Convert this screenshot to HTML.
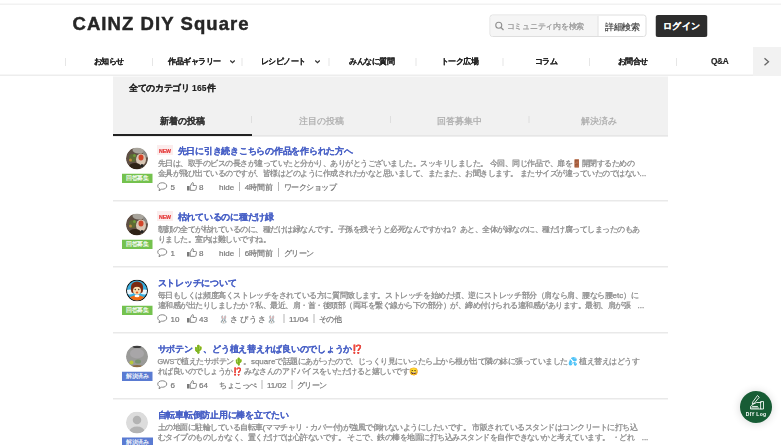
<!DOCTYPE html>
<html><head><meta charset="utf-8">
<style>
*{box-sizing:border-box;margin:0;padding:0}
html,body{width:781px;height:445px;overflow:hidden;background:#fff}
body{font-family:"Liberation Sans",sans-serif;color:#333;position:relative}
#r{position:absolute;left:0;top:0;width:1562px;height:890px;transform:scale(0.5);transform-origin:0 0;overflow:hidden}
.a{position:absolute;white-space:nowrap}
.topline{left:0;top:7px;width:1562px;height:3px;background:#f2f2f2}
.logo{left:145px;top:23px;font-size:37px;font-weight:bold;letter-spacing:2.15px;color:#262626;line-height:48px;-webkit-text-stroke:0.9px #262626}
.search{left:979px;top:29px;width:314px;height:45px;border:2px solid #dedede;border-radius:6px;background:#fff;overflow:hidden}
.search .inp{position:absolute;left:0;top:0;width:216px;height:41px;background:#f5f5f5;border-right:2px solid #e4e4e4}
.search .ph{position:absolute;left:32px;top:11px;font-size:15px;letter-spacing:0.5px;line-height:20px;color:#9a9a9a;-webkit-text-stroke:0.5px #9a9a9a}
.search .btn{position:absolute;left:229px;top:14px;font-size:17px;line-height:20px;color:#444;-webkit-text-stroke:0.4px #444}
.login{left:1311px;top:30px;width:104px;height:44px;background:#2d2d2d;border-radius:5px;color:#fff;font-size:18.5px;font-weight:bold;line-height:44px;text-align:center;-webkit-text-stroke:0.3px #fff}
.it{top:94px;height:56px;font-size:15px;font-weight:bold;color:#222;line-height:56px;-webkit-text-stroke:0.3px #222}
.sep{top:116px;width:2px;height:16px;background:#e6e6e6}
.chev{top:119px}
.navline{left:0;top:149px;width:1506px;height:3px;background:#ededed}
.navnext{left:1506px;top:94px;width:56px;height:58px;background:#f2f2f2}
.panel{left:226px;top:153px;width:1110px;height:120px;background:#f1f1f1}
.cat{left:258px;top:164px;font-size:17px;letter-spacing:0.3px;font-weight:bold;color:#222;line-height:24px;-webkit-text-stroke:0.3px #222}
.tab{top:230px;width:277.5px;text-align:center;font-size:17.5px;line-height:24px;color:#aaa;-webkit-text-stroke:0.4px #aaa}
.tab.on{color:#333;font-weight:bold;-webkit-text-stroke:0.3px #333}
.tabsep{top:232px;width:2px;height:14px;background:#dedede}
.tabline{left:226px;top:270px;width:1110px;height:3px;background:#e6e6e6}
.uline{left:226px;top:268px;width:277.5px;height:4px;background:#222}
.post{position:absolute;left:226px;width:1110px;height:133px;border-bottom:3px solid #e9e9e9}
.av{position:absolute;left:26px;top:25px;width:44px;height:44px;border-radius:50%;overflow:hidden}
.badge{position:absolute;left:18px;top:77px;width:61px;height:19px;font-size:11px;line-height:19px;color:#fff;text-align:center;white-space:nowrap;-webkit-text-stroke:0.3px #fff}
.green{background:#74c24e}
.blue{background:#5a7bd2}
.new{position:absolute;left:88px;top:20px;width:32px;height:20px;background:#fbeded;color:#e53838;font-size:10.5px;font-weight:bold;line-height:25px;text-align:center;letter-spacing:-0.2px;-webkit-text-stroke:0.4px #e53838}
.ttl{position:absolute;left:129px;top:20px;font-size:17px;letter-spacing:0.5px;line-height:24px;color:#4860c6;font-weight:bold;white-space:nowrap;-webkit-text-stroke:0.35px #4860c6}
.ttl.nn{left:89px}
.body{position:absolute;left:89px;top:46px;font-size:15px;line-height:20px;color:#8a8a8a;white-space:nowrap;-webkit-text-stroke:0.5px #8a8a8a}
.mt{position:absolute;top:92px;height:24px;font-size:15px;line-height:24px;color:#777;white-space:nowrap;-webkit-text-stroke:0.4px #777}
.l{font-size:16px}
.g{font-size:14.5px;letter-spacing:-0.6px}
.ic{position:absolute}
.bar{display:inline-block;width:2px;height:18px;background:#b5b5b5;margin:0 9px 0 10px;vertical-align:-3px}
.un{letter-spacing:3.5px}
</style></head><body><div id="r">
<div class="a topline"></div>
<div class="a logo">CAINZ DIY Square</div>
<div class="a search"><div class="inp">
<svg style="position:absolute;left:8px;top:11px" width="20" height="20" viewBox="0 0 20 20"><circle cx="8.5" cy="8.5" r="6" fill="none" stroke="#909090" stroke-width="2.2"/><path d="M13 13L18 18" stroke="#909090" stroke-width="2.4"/></svg>
<div class="ph">コミュニティ内を検索</div></div><div class="btn">詳細検索</div></div>
<div class="a login">ログイン</div>

<div class="a sep" style="left:130px"></div>
<div class="a it" style="left:187px">お知らせ</div>
<div class="a sep" style="left:304px"></div>
<div class="a it" style="left:336px">作品ギャラリー</div>
<svg class="a chev" style="left:459px" width="12" height="10" viewBox="0 0 12 10"><path d="M1.5 2L6 6.5L10.5 2" fill="none" stroke="#333" stroke-width="2.4"/></svg>
<div class="a sep" style="left:483px"></div>
<div class="a it" style="left:521px">レシピノート</div>
<svg class="a chev" style="left:629px" width="12" height="10" viewBox="0 0 12 10"><path d="M1.5 2L6 6.5L10.5 2" fill="none" stroke="#333" stroke-width="2.4"/></svg>
<div class="a sep" style="left:657px"></div>
<div class="a it" style="left:698px">みんなに質問</div>
<div class="a sep" style="left:831px"></div>
<div class="a it" style="left:881px">トーク広場</div>
<div class="a sep" style="left:1005px"></div>
<div class="a it" style="left:1069px">コラム</div>
<div class="a sep" style="left:1178px"></div>
<div class="a it" style="left:1235px">お問合せ</div>
<div class="a sep" style="left:1352px"></div>
<div class="a it" style="left:1422px;font-size:16.5px;letter-spacing:-0.6px;top:93px">Q&amp;A</div>
<div class="a navnext"><svg style="position:absolute;left:16px;top:20px" width="20" height="20" viewBox="0 0 20 20"><path d="M7 2.5L15 9.5L7 16.5" fill="none" stroke="#666" stroke-width="2.6"/></svg></div>
<div class="a navline"></div>

<div class="a panel"></div>
<div class="a cat">全てのカテゴリ 165件</div>
<div class="a tabline"></div>
<div class="a tab on" style="left:226px">新着の投稿</div>
<div class="a tabsep" style="left:502px"></div>
<div class="a tab" style="left:503.5px">注目の投稿</div>
<div class="a tabsep" style="left:780px"></div>
<div class="a tab" style="left:781px">回答募集中</div>
<div class="a tabsep" style="left:1057px"></div>
<div class="a tab" style="left:1058.5px">解決済み</div>
<div class="a uline"></div>

<div class="post" style="top:270px">
<div class="av"><svg width="44" height="44" viewBox="0 0 44 44"><defs><clipPath id="c1"><circle cx="22" cy="22" r="22"/></clipPath><filter id="f1" x="-20%" y="-20%" width="140%" height="140%"><feGaussianBlur stdDeviation="1.1"/></filter></defs><g clip-path="url(#c1)"><g filter="url(#f1)">
<rect x="-5" y="-5" width="54" height="54" fill="#5e5044"/>
<ellipse cx="26" cy="5" rx="13" ry="7" fill="#a8a49c"/>
<ellipse cx="40" cy="12" rx="6" ry="8" fill="#8c8a86"/>
<ellipse cx="13" cy="21" rx="7" ry="8" fill="#5d6a34"/>
<ellipse cx="9" cy="25" rx="3" ry="3" fill="#b88a3c"/>
<ellipse cx="17" cy="16" rx="3" ry="3" fill="#6e9a3a"/>
<ellipse cx="30" cy="24" rx="10" ry="12" fill="#d8c6b4"/>
<ellipse cx="30" cy="20" rx="5" ry="6" fill="#d2452c"/>
<ellipse cx="18" cy="38" rx="12" ry="7" fill="#2e2218"/>
<ellipse cx="32" cy="36" rx="3" ry="3" fill="#222"/>
</g></g></svg></div>
<div class="badge green">回答募集</div>
<div class="new">NEW</div>
<div class="ttl">先日に引き続きこちらの作品を作られた方へ</div>
<div class="body">先日は、取手のビスの長さが違っていたと分かり、ありがとうございました。スッキリしました。 今回、同じ作品で、扉を🚪開閉するための<br>金具が飛び出ているのですが、皆様はどのように作成されたかなと思いまして、またまた、お聞きします。 またサイズが違っていたのではない<span class="l">...</span></div>
<svg class="ic" style="left:88px;top:94px" width="22" height="20" viewBox="0 0 22 20"><path d="M10.5 1.5C5.2 1.5 1.5 4.4 1.5 8c0 2.3 1.4 4.1 3.6 5.2L4 17.5l5-3.1c.5.1 1 .1 1.5.1 5.3 0 9-2.9 9-6.5s-3.7-6.5-9-6.5z" fill="none" stroke="#7a7a7a" stroke-width="1.8" stroke-linejoin="round"/></svg>
<div class="mt l" style="left:115px">5</div>
<svg class="ic" style="left:147px;top:93px" width="22" height="20" viewBox="0 0 22 20"><rect x="1" y="9" width="5" height="9" fill="#7a7a7a"/><path d="M7.5 9.5L11.5 2.5c1.2-.8 2.6 0 2.4 1.5L13 8h5.5c1.2 0 2 .9 1.7 2.1l-1.6 6.2c-.3.9-1 1.4-1.9 1.4H7.5z" fill="none" stroke="#7a7a7a" stroke-width="1.8" stroke-linejoin="round"/></svg>
<div class="mt l" style="left:172px">8</div>
<div class="mt" style="left:212px"><span class="l">hide</span><span class="bar"></span><span class="l">4時間前</span><span class="bar"></span>ワークショップ</div>
</div>

<div class="post" style="top:402px">
<div class="av"><svg width="44" height="44" viewBox="0 0 44 44"><defs><clipPath id="c2"><circle cx="22" cy="22" r="22"/></clipPath><filter id="f2" x="-20%" y="-20%" width="140%" height="140%"><feGaussianBlur stdDeviation="1.1"/></filter></defs><g clip-path="url(#c2)"><g filter="url(#f2)">
<rect x="-5" y="-5" width="54" height="54" fill="#5e5044"/>
<ellipse cx="26" cy="5" rx="13" ry="7" fill="#a8a49c"/>
<ellipse cx="40" cy="12" rx="6" ry="8" fill="#8c8a86"/>
<ellipse cx="13" cy="21" rx="7" ry="8" fill="#5d6a34"/>
<ellipse cx="9" cy="25" rx="3" ry="3" fill="#b88a3c"/>
<ellipse cx="17" cy="16" rx="3" ry="3" fill="#6e9a3a"/>
<ellipse cx="30" cy="24" rx="10" ry="12" fill="#d8c6b4"/>
<ellipse cx="30" cy="20" rx="5" ry="6" fill="#d2452c"/>
<ellipse cx="18" cy="38" rx="12" ry="7" fill="#2e2218"/>
<ellipse cx="32" cy="36" rx="3" ry="3" fill="#222"/>
</g></g></svg></div>
<div class="badge green">回答募集</div>
<div class="new">NEW</div>
<div class="ttl">枯れているのに種だけ緑</div>
<div class="body">朝顔の全てが枯れているのに、種だけは緑なんです。子孫を残そうと必死なんですかね？ あと、全体が緑なのに、種だけ腐ってしまったのもあ<br>りました。室内は難しいですね。</div>
<svg class="ic" style="left:88px;top:94px" width="22" height="20" viewBox="0 0 22 20"><path d="M10.5 1.5C5.2 1.5 1.5 4.4 1.5 8c0 2.3 1.4 4.1 3.6 5.2L4 17.5l5-3.1c.5.1 1 .1 1.5.1 5.3 0 9-2.9 9-6.5s-3.7-6.5-9-6.5z" fill="none" stroke="#7a7a7a" stroke-width="1.8" stroke-linejoin="round"/></svg>
<div class="mt l" style="left:115px">1</div>
<svg class="ic" style="left:147px;top:93px" width="22" height="20" viewBox="0 0 22 20"><rect x="1" y="9" width="5" height="9" fill="#7a7a7a"/><path d="M7.5 9.5L11.5 2.5c1.2-.8 2.6 0 2.4 1.5L13 8h5.5c1.2 0 2 .9 1.7 2.1l-1.6 6.2c-.3.9-1 1.4-1.9 1.4H7.5z" fill="none" stroke="#7a7a7a" stroke-width="1.8" stroke-linejoin="round"/></svg>
<div class="mt l" style="left:172px">8</div>
<div class="mt" style="left:212px"><span class="l">hide</span><span class="bar"></span><span class="l">6時間前</span><span class="bar"></span>グリーン</div>
</div>

<div class="post" style="top:534px">
<div class="av"><svg width="44" height="44" viewBox="0 0 44 44"><defs><clipPath id="c3"><circle cx="22" cy="22" r="20"/></clipPath></defs>
<circle cx="22" cy="22" r="22" fill="#141414"/><g clip-path="url(#c3)">
<rect width="44" height="44" fill="#3aaede"/>
<ellipse cx="7" cy="25" rx="8" ry="5" fill="#eef6fa"/>
<ellipse cx="37" cy="25" rx="8" ry="5" fill="#eef6fa"/>
<ellipse cx="22" cy="15" rx="12" ry="11" fill="#7a2a12"/>
<ellipse cx="14" cy="20" rx="4" ry="7" fill="#7a2a12"/>
<ellipse cx="30" cy="20" rx="4" ry="7" fill="#7a2a12"/>
<ellipse cx="22" cy="22" rx="8" ry="8.5" fill="#fbdcae"/>
<path d="M13 14Q22 6 31 14L30 17Q22 12 14 17Z" fill="#7a2a12"/>
<circle cx="18.5" cy="20" r="1.3" fill="#3a2a1a"/><circle cx="25.5" cy="20" r="1.3" fill="#3a2a1a"/>
<ellipse cx="22" cy="26" rx="2.5" ry="2" fill="#e85a20"/>
<ellipse cx="22" cy="41" rx="17" ry="9" fill="#f06a12"/>
<ellipse cx="22" cy="33" rx="5" ry="2.5" fill="#fff"/>
</g></svg></div>
<div class="badge green">回答募集</div>
<div class="ttl nn">ストレッチについて</div>
<div class="body"><span style="letter-spacing:0.17px">毎日もしくは頻度高くストレッチをされている方に質問致します。ストレッチを始めた頃、逆にストレッチ部分（肩なら肩、腰なら腰</span><span class="l">etc</span>）に<br>違和感が出たりしましたか？私、最近、肩・首・後頭部（両耳を繋ぐ線から下の部分）が、締め付けられる違和感があります。最初、肩が張　<span class="l">...</span></div>
<svg class="ic" style="left:88px;top:94px" width="22" height="20" viewBox="0 0 22 20"><path d="M10.5 1.5C5.2 1.5 1.5 4.4 1.5 8c0 2.3 1.4 4.1 3.6 5.2L4 17.5l5-3.1c.5.1 1 .1 1.5.1 5.3 0 9-2.9 9-6.5s-3.7-6.5-9-6.5z" fill="none" stroke="#7a7a7a" stroke-width="1.8" stroke-linejoin="round"/></svg>
<div class="mt l" style="left:115px">10</div>
<svg class="ic" style="left:147px;top:93px" width="22" height="20" viewBox="0 0 22 20"><rect x="1" y="9" width="5" height="9" fill="#7a7a7a"/><path d="M7.5 9.5L11.5 2.5c1.2-.8 2.6 0 2.4 1.5L13 8h5.5c1.2 0 2 .9 1.7 2.1l-1.6 6.2c-.3.9-1 1.4-1.9 1.4H7.5z" fill="none" stroke="#7a7a7a" stroke-width="1.8" stroke-linejoin="round"/></svg>
<div class="mt l" style="left:172px">43</div>
<div class="mt" style="left:212px"><span class="un">🐰さぴうさ🐰</span><span class="bar"></span><span class="l">11/04</span><span class="bar"></span>その他</div>
</div>

<div class="post" style="top:666px">
<div class="av"><svg width="44" height="44" viewBox="0 0 44 44"><defs><clipPath id="c4"><circle cx="22" cy="22" r="22"/></clipPath><filter id="f4" x="-20%" y="-20%" width="140%" height="140%"><feGaussianBlur stdDeviation="1.2"/></filter></defs><g clip-path="url(#c4)"><g filter="url(#f4)">
<rect x="-5" y="-5" width="54" height="54" fill="#9a9a98"/>
<ellipse cx="22" cy="1" rx="10" ry="4" fill="#3a3a3a"/>
<ellipse cx="22" cy="16" rx="14" ry="10" fill="#a8a6a8"/>
<ellipse cx="11" cy="34" rx="4" ry="4" fill="#b8c83a"/>
<ellipse cx="24" cy="32" rx="6" ry="4" fill="#7a9270"/>
<ellipse cx="22" cy="43" rx="12" ry="4" fill="#8a6a40"/>
</g></g></svg></div>
<div class="badge blue">解決済み</div>
<div class="ttl nn">サボテン🌵、どう植え替えれば良いのでしょうか⁉️</div>
<div class="body"><span class="g">GWS</span>で植えたサボテン🌵。<span class="l">square</span>で話題にあがったので、じっくり見にいったら上から根が出て隣の鉢に張っていました💦 植え替えはどうす<br>れば良いのでしょうか⁉️ みなさんのアドバイスをいただけると嬉しいです😄</div>
<svg class="ic" style="left:88px;top:94px" width="22" height="20" viewBox="0 0 22 20"><path d="M10.5 1.5C5.2 1.5 1.5 4.4 1.5 8c0 2.3 1.4 4.1 3.6 5.2L4 17.5l5-3.1c.5.1 1 .1 1.5.1 5.3 0 9-2.9 9-6.5s-3.7-6.5-9-6.5z" fill="none" stroke="#7a7a7a" stroke-width="1.8" stroke-linejoin="round"/></svg>
<div class="mt l" style="left:115px">6</div>
<svg class="ic" style="left:147px;top:93px" width="22" height="20" viewBox="0 0 22 20"><rect x="1" y="9" width="5" height="9" fill="#7a7a7a"/><path d="M7.5 9.5L11.5 2.5c1.2-.8 2.6 0 2.4 1.5L13 8h5.5c1.2 0 2 .9 1.7 2.1l-1.6 6.2c-.3.9-1 1.4-1.9 1.4H7.5z" fill="none" stroke="#7a7a7a" stroke-width="1.8" stroke-linejoin="round"/></svg>
<div class="mt l" style="left:172px">64</div>
<div class="mt" style="left:212px">ちょこっぺ<span class="bar"></span><span class="l">11/02</span><span class="bar"></span>グリーン</div>
</div>

<div class="post" style="top:798px;border-bottom:none">
<div class="av"><svg width="44" height="44" viewBox="0 0 44 44"><defs><clipPath id="c5"><circle cx="22" cy="22" r="22"/></clipPath></defs><g clip-path="url(#c5)">
<rect width="44" height="44" fill="#dcdcdc"/>
<circle cx="22" cy="17" r="8.5" fill="#b3b3b3"/>
<ellipse cx="22" cy="40" rx="15" ry="10" fill="#b3b3b3"/>
</g></svg></div>
<div class="badge blue">解決済み</div>
<div class="ttl nn">自転車転倒防止用に棒を立てたい</div>
<div class="body">土の地面に駐輪している自転車<span class="l">(</span>ママチャリ・カバー付<span class="l">)</span>が強風で倒れないようにしたいです。 市販されているスタンドはコンクリートに打ち込<br>むタイプのものしかなく、置くだけでは心許ないです。 そこで、鉄の棒を地面に打ち込みスタンドを自作できないかと考えています。 ・どれ　<span class="l">...</span></div>
</div>
<div class="a" style="left:1480px;top:782px;width:64px;height:64px;border-radius:50%;background:#175c35;box-shadow:0 1px 18px rgba(0,0,0,0.16)">
<svg style="position:absolute;left:0;top:0" width="64" height="64" viewBox="0 0 64 64"><g fill="none" stroke="#fff" stroke-width="1.7" stroke-linejoin="round" stroke-linecap="round">
<rect x="42" y="21" width="5" height="15"/>
<path d="M42 23H33L27 26L21 31V36H42"/>
<path d="M25 31H35M23 34H37"/>
<path d="M35.5 9.5L38.5 12.5L28 25L24.5 26.5L25.5 22.5Z"/>
</g></svg>
<div style="position:absolute;left:0;top:40px;width:64px;text-align:center;font-size:10px;line-height:14px;font-weight:bold;color:#fff;letter-spacing:0.45px;white-space:nowrap">DIY Log</div>
</div>
</div></body></html>
